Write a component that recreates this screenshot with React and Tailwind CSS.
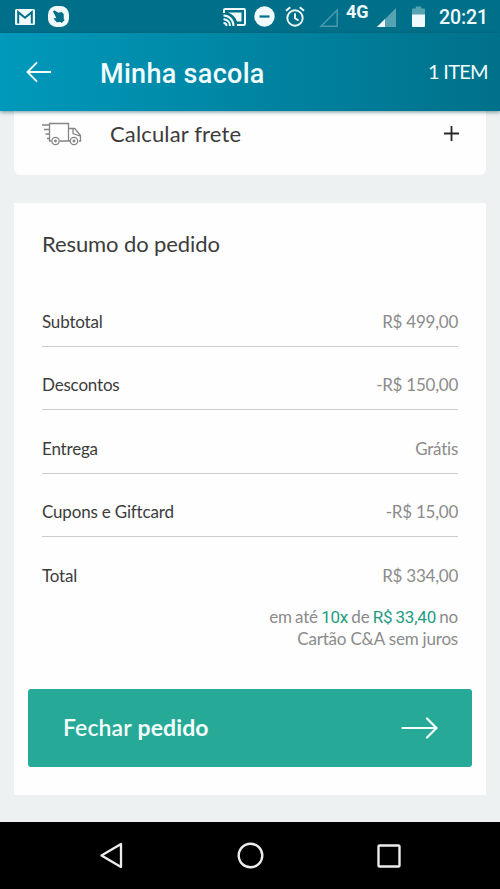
const rows = [
  { label: 'Subtotal', value: 'R$ 499,00' },
  { label: 'Descontos', value: '-R$ 150,00' },
  { label: 'Entrega', value: 'Grátis' },
  { label: 'Cupons e Giftcard', value: '-R$ 15,00' },
  { label: 'Total', value: 'R$ 334,00' },
];

function StatusBar() {
  return (
    <div className="flex h-[33px] shrink-0 items-start bg-[#00708a] text-[#f0fafc] font-['Roboto',sans-serif]">
      <svg className="mt-[9px] ml-[15px] h-4 w-5" viewBox="0 0 20 16">
        <rect width="20" height="16" rx="1.5" fill="currentColor" />
        <path d="M3.2 14.5V3.2l6.8 5.6 6.8-5.6v11.3" fill="none" stroke="#00708a" strokeWidth="2" />
      </svg>
      <svg className="mt-1.5 ml-[13px] h-[21px] w-[21px]" viewBox="0 0 21 21">
        <rect width="21" height="21" rx="8.5" fill="currentColor" />
        <path d="M5 5.500l1.200-1.300 4.300 2.600 3.200-.8 2 2 .1 5 .9 1-3 3-1-.9-4 .1-2.800-3.200.6-1 2 .3z" fill="#00708a" />
      </svg>
      <svg className="mt-2 ml-[154px] h-[18px] w-[23px]" viewBox="0 0 23 18" fill="none" stroke="currentColor" strokeWidth="2">
        <path d="M1 5V2.2Q1 1 2.2 1h18.6Q22 1 22 2.2v13.6q0 1.2-1.2 1.2H14" />
        <path d="M5 4.500h13.500v9H14C12.500 9 9.500 6 5 4.500z" fill="currentColor" stroke="none" />
        <path d="M.5 7.500C6 7.500 10.500 12 10.500 18M.5 11.200c3.700 0 6.500 3 6.500 6.800M.5 15q3 0 3 3" />
      </svg>
      <svg className="mt-1.5 ml-2 h-[21px] w-[21px]" viewBox="0 0 21 21">
        <circle cx="10.500" cy="10.500" r="10.200" fill="currentColor" />
        <path d="M5.500 10.500h10" stroke="#00708a" strokeWidth="2.200" />
      </svg>
      <svg className="mt-1.5 ml-2.5 h-[21px] w-5" viewBox="0 0 20 21" fill="none" stroke="currentColor" strokeWidth="1.900">
        <circle cx="10" cy="12" r="7.700" />
        <path d="M1 4.800L5.300 1.200M19 4.800l-4.300-3.600M10 7.300v5l3.600 2.200" />
      </svg>
      <svg className="mt-2 ml-3.5 h-[19px] w-[19px] text-[#4b9cae]" viewBox="0 0 19 19">
        <path d="M2 18.200L18.200 2v16.200z" fill="none" stroke="currentColor" strokeWidth="1.500" />
      </svg>
      <span className="mt-[2px] ml-2 w-6 text-[18px] leading-[20px] font-bold">4G</span>
      <svg className="mt-2 ml-[7px] h-[19px] w-[19px]" viewBox="0 0 19 19">
        <path d="M0 19L19 0v19z" fill="#57a2b3" />
        <path d="M0 19l8-8v8z" fill="currentColor" />
      </svg>
      <svg className="mt-1.5 ml-4 h-[21px] w-[13px]" viewBox="0 0 13 21">
        <path d="M0 3.500Q0 2.500 1 2.500h2.800V.5h5.400v2H12q1 0 1 1V9H0z" fill="#57a2b3" />
        <path d="M0 8.500h13V20q0 1-1 1H1q-1 0-1-1z" fill="currentColor" />
      </svg>
      <span className="mt-1.5 ml-3.5 text-[19.5px] leading-6 font-medium tracking-[-0.1px] whitespace-nowrap">20:21</span>
    </div>
  );
}

function Header() {
  return (
    <header className="relative z-10 flex h-[78px] shrink-0 items-center bg-linear-to-r from-[#0099bb] to-[#00718b] pr-3 pl-[26px] text-[#f2fcfd] shadow-[0_1px_4px_rgba(0,60,75,0.55)]">
      <svg className="h-[22px] w-[26px]" viewBox="0 0 26 22" fill="none" stroke="currentColor" strokeWidth="1.900">
        <path d="M25 11H1.500M11 1.300L1.500 11l9.500 9.700" />
      </svg>
      <h1 className="mt-[3px] ml-12 font-['Roboto',sans-serif] text-[27px] leading-8 font-medium tracking-[0.3px] whitespace-nowrap">Minha sacola</h1>
      <span className="mb-0.5 ml-auto text-[20px] tracking-[-0.7px] whitespace-nowrap">1 ITEM</span>
    </header>
  );
}

function TruckIcon() {
  return (
    <svg className="h-6 w-10" viewBox="0 0 40 24" fill="none" stroke="#858585" strokeWidth="1.300">
      <path d="M9 19H7.500V1.500h19V19H18M26.500 6.500h6.200l5.800 7V19h-1.500M28 19h-1.500M31 7v4.500l7 2.500M0 3h7.500M2 7.500h5.500M3.500 12h4M5 16.500h2.500" />
      <circle cx="13.500" cy="19" r="3.700" />
      <circle cx="13.500" cy="19" r=".8" />
      <circle cx="32" cy="19" r="3.700" />
      <circle cx="32" cy="19" r=".8" />
    </svg>
  );
}

function Summary() {
  return (
    <section className="mx-3.5 mt-7 h-[592px] shrink-0 bg-[#fefefe] px-3.5 pt-[26px]">
      <h2 className="px-3.5 text-[22px] leading-[30px] tracking-[-0.1px]">Resumo do pedido</h2>
      <div className="mt-6 px-3.5">
        {rows.map((row, i) => (
          <div key={row.label} className={`flex h-[63.5px] items-end justify-between border-b pb-3 text-[17px] leading-[25px] ${i < rows.length - 1 ? 'border-[#cbcbcb]' : 'border-transparent'}`}>
            <span className="tracking-[-0.18px]">{row.label}</span>
            <span className="tracking-[-0.25px] text-[#8b8b8b]">{row.value}</span>
          </div>
        ))}
        <p className="mt-[5px] text-right text-[17px] leading-[21px] tracking-[-0.2px] text-[#8b8b8b]">
          <span className="[word-spacing:-0.9px]">
            em até <Price>10x</Price> de <Price>R$ 33,40</Price> no
          </span>
          <br />
          Cartão C&amp;A sem juros
        </p>
      </div>
      <button className="mt-10 flex h-[78px] w-full items-center justify-between rounded-[3px] bg-[#26a996] pr-[34px] pl-[35px] text-[#f3fefc]">
        <span className="mb-px text-[23px] font-bold tracking-[0.1px]">
          <span className="font-semibold">Fechar</span> pedido
        </span>
        <svg className="h-[22px] w-[37px]" viewBox="0 0 37 22" fill="none" stroke="currentColor" strokeWidth="2.200" strokeLinecap="round">
          <path d="M1.500 11H35M26 1.500l9.500 9.500-9.500 9.500" />
        </svg>
      </button>
    </section>
  );
}

function Price({ children }) {
  return <span className="font-['Roboto',sans-serif] text-[#259c81]">{children}</span>;
}

function NavBar() {
  return (
    <nav className="mt-auto flex h-[67px] shrink-0 items-center justify-between bg-black px-[99px] text-[#ececec]">
      <svg className="h-[27px] w-6" viewBox="0 0 24 27" fill="none" stroke="currentColor" strokeWidth="2.300" strokeLinejoin="round">
        <path d="M22 2v23L2.500 13.500z" />
      </svg>
      <svg className="h-[27px] w-[27px]" viewBox="0 0 27 27" fill="none" stroke="currentColor" strokeWidth="2.400">
        <circle cx="13.500" cy="13.500" r="11.800" />
      </svg>
      <svg className="h-6 w-6" viewBox="0 0 24 24" fill="none" stroke="currentColor" strokeWidth="2.400">
        <rect x="1.500" y="1.500" width="21" height="21" rx="1" />
      </svg>
    </nav>
  );
}

export default function App() {
  return (
    <div className="flex h-[889px] w-[500px] flex-col overflow-hidden bg-[#edf1f1] font-['Lato',sans-serif] text-[#3c3c3c]">
      <StatusBar />
      <Header />
      <section className="mx-3.5 flex h-16 shrink-0 items-start rounded-b-md bg-[#fefefe] pr-[27px] pl-7">
        <div className="mt-[11px]"><TruckIcon /></div>
        <h2 className="mt-2 ml-7 text-[22px] leading-[30px] tracking-[0.15px]">Calcular frete</h2>
        <svg className="mt-[15px] ml-auto h-[15px] w-[15px]" viewBox="0 0 15 15" stroke="#282828" strokeWidth="1.800">
          <path d="M7.500 0v15M0 7.500h15" />
        </svg>
      </section>
      <Summary />
      <NavBar />
    </div>
  );
}
